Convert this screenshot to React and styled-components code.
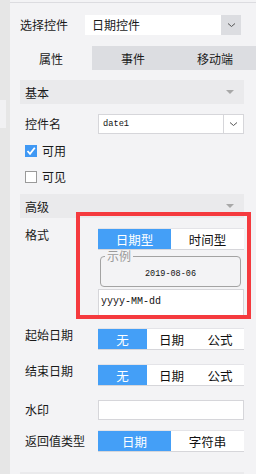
import React from "react";
import styled, { createGlobalStyle } from "styled-components";

const Global = createGlobalStyle`
  html, body { margin: 0; padding: 0; }
  body {
    width: 256px; height: 474px; overflow: hidden;
    font-family: "Noto Sans CJK SC", "Noto Sans", sans-serif;
    font-size: 12px; color: #1a1a1a;
  }
`;

const Page = styled.div`
  display: flex;
  width: 256px;
  height: 474px;
  overflow: hidden;
`;

const Strip = styled.div`
  width: 10px;
  flex: none;
  background: #e6e6e6;
  display: flex;
  flex-direction: column;
`;

const StripBlock = styled.div`
  margin-top: 100px;
  width: 6px;
  height: 28px;
  background: #f1f1f3;
`;

const Main = styled.div`
  flex: 1;
  background: #f3f3f5;
  display: flex;
  flex-direction: column;
  padding-top: 2px;
  & > * { flex-shrink: 0; }
`;

const TopLine = styled.div`
  height: 1px;
  background: #dcdce0;
`;

const SelectRow = styled.div`
  display: flex;
  align-items: center;
  height: 20px;
  margin-top: 12px;
  padding-left: 10px;
`;

const SelectLabel = styled.span`
  width: 65px;
  line-height: 20px;
`;

const Combo = styled.div`
  display: flex;
  width: 156px;
  height: 20px;
  background: #fff;
`;

const ComboText = styled.span`
  flex: 1;
  padding-left: 7px;
  line-height: 20px;
`;

const ComboBtn = styled.div`
  width: 20px;
  background: #dcdde1;
  display: flex;
  align-items: center;
  justify-content: center;
`;

const Tabs = styled.div`
  display: grid;
  grid-template-columns: 82px 82px 82px;
  height: 24px;
  margin-top: 11px;
`;

const Tab = styled.div`
  background: ${(p) => (p.$active ? "#f3f3f5" : "#dcdde1")};
  display: flex;
  align-items: center;
  justify-content: center;
`;

const Content = styled.div`
  display: flex;
  flex-direction: column;
  padding: 10px 12px 0 10px;
  & > * { flex-shrink: 0; }
`;

const Header = styled.div`
  height: 24px;
  background: #eaeaec;
  display: flex;
  align-items: center;
  justify-content: space-between;
  padding: 0 10px 0 5px;
`;

const Tri = styled.span`
  width: 0;
  height: 0;
  border-left: 4px solid transparent;
  border-right: 4px solid transparent;
  border-top: 4px solid #a8a8a8;
`;

const Row = styled.div`
  display: flex;
  align-items: ${(p) => (p.$top ? "flex-start" : "center")};
  margin-top: ${(p) => p.$mt}px;
`;

const Label = styled.span`
  width: 73px;
  padding-left: 5px;
  flex: none;
  line-height: ${(p) => p.$lh || 20}px;
`;

const Input = styled.div`
  width: 146px;
  height: ${(p) => p.$h || 20}px;
  box-sizing: border-box;
  border: 1px solid #d6d6da;
  background: #fff;
  display: flex;
`;

const InputText = styled.span`
  flex: 1;
  font-family: "Liberation Mono", "DejaVu Sans Mono", monospace;
  font-size: ${(p) => p.$fs || 9}px;
  line-height: ${(p) => p.$lh || 18}px;
  padding-left: ${(p) => p.$pl || 4}px;
  color: #111;
`;

const DropBtn = styled.div`
  width: 19px;
  border-left: 1px solid #d6d6da;
  display: flex;
  align-items: center;
  justify-content: center;
`;

const Check = styled.span`
  width: 12px;
  height: 12px;
  box-sizing: border-box;
  border: 1px solid ${(p) => (p.$on ? "#3f98f4" : "#9a9a9a")};
  background: ${(p) => (p.$on ? "#3f98f4" : "#fff")};
  display: flex;
  align-items: center;
  justify-content: center;
  margin-left: 5px;
  margin-right: 5px;
`;

const CheckRow = styled.div`
  display: flex;
  align-items: center;
  height: 12px;
  margin-top: ${(p) => p.$mt}px;
  margin-bottom: ${(p) => p.$mb || 0}px;
  line-height: 12px;
`;

const Seg = styled.div`
  display: grid;
  grid-template-columns: ${(p) => p.$cols};
  width: 146px;
  height: 22px;
  box-sizing: border-box;
  background: #fff;
  border-bottom: 1px solid #d6d6da;
  border-top: 1px solid #e4e4e8;
`;

const SegItem = styled.div`
  display: flex;
  align-items: center;
  justify-content: center;
  background: ${(p) => (p.$on ? "#449ff7" : "#fff")};
  color: ${(p) => (p.$on ? "#fff" : "#111")};
  font-size: 12.5px;
`;

const FormatBox = styled.div`
  position: relative;
  display: flex;
  flex-direction: column;
`;

const Fieldset = styled.fieldset`
  margin: 0 3px 2px 2px;
  padding: 2px 0 8px;
  border: 1px solid #a3a3a3;
  border-radius: 4px;
  height: 37px;
  box-sizing: border-box;
  display: flex;
  align-items: center;
  justify-content: center;
  min-width: 0;
`;

const Legend = styled.legend`
  color: #9a9a9a;
  padding: 0 2px;
  margin-left: 4px;
  font-size: 12px;
  line-height: 12px;
`;

const Sample = styled.span`
  font-family: "Liberation Mono", "DejaVu Sans Mono", monospace;
  font-size: 8.5px;
  color: #111;
  margin-top: 5px;
`;

const RedFrame = styled.div`
  position: absolute;
  left: -22px;
  top: -16px;
  width: 175px;
  height: 107px;
  box-sizing: border-box;
  border: 4px solid #f53a3e;
  pointer-events: none;
`;

const Spacer = styled.div`
  height: ${(p) => p.$h}px;
`;

const Chevron = () => (
  <svg width="9" height="6" viewBox="0 0 9 6">
    <path d="M1 1.5 L4.5 4.5 L8 1.5" fill="none" stroke="#555" strokeWidth="1" />
  </svg>
);

const CheckMark = () => (
  <svg width="10" height="10" viewBox="0 0 10 10">
    <path d="M1.5 5 L4 7.8 L8.8 1.8" fill="none" stroke="#fff" strokeWidth="1.8" />
  </svg>
);

export default function App() {
  return (
    <>
      <Global />
      <Page>
        <Strip>
          <StripBlock />
        </Strip>
        <Main>
          <TopLine />
          <SelectRow>
            <SelectLabel>选择控件</SelectLabel>
            <Combo>
              <ComboText>日期控件</ComboText>
              <ComboBtn>
                <Chevron />
              </ComboBtn>
            </Combo>
          </SelectRow>
          <Tabs>
            <Tab $active>属性</Tab>
            <Tab>事件</Tab>
            <Tab>移动端</Tab>
          </Tabs>
          <Content>
            <Header>
              <span>基本</span>
              <Tri />
            </Header>
            <Row $mt={10}>
              <Label>控件名</Label>
              <Input>
                <InputText $fs={8.7}>date1</InputText>
                <DropBtn>
                  <Chevron />
                </DropBtn>
              </Input>
            </Row>
            <CheckRow $mt={11}>
              <Check $on>
                <CheckMark />
              </Check>
              可用
            </CheckRow>
            <CheckRow $mt={14} $mb={11}>
              <Check />
              可见
            </CheckRow>
            <Header>
              <span>高级</span>
              <Tri />
            </Header>
            <Row $mt={10} $top>
              <Label $lh={14}>格式</Label>
              <FormatBox>
                <Seg $cols="73px 73px">
                  <SegItem $on>日期型</SegItem>
                  <SegItem>时间型</SegItem>
                </Seg>
                <Fieldset>
                  <Legend>示例</Legend>
                  <Sample>2019-08-06</Sample>
                </Fieldset>
                <Input $h={29}>
                  <InputText $fs={10} $pl={2} $lh={24}>
                    yyyy-MM-dd
                  </InputText>
                </Input>
                <RedFrame />
              </FormatBox>
            </Row>
            <Row $mt={10} $top>
              <Label $lh={14}>起始日期</Label>
              <Seg $cols="49px 49px 48px">
                <SegItem $on>无</SegItem>
                <SegItem>日期</SegItem>
                <SegItem>公式</SegItem>
              </Seg>
            </Row>
            <Row $mt={14} $top>
              <Label $lh={14}>结束日期</Label>
              <Seg $cols="49px 49px 48px">
                <SegItem $on>无</SegItem>
                <SegItem>日期</SegItem>
                <SegItem>公式</SegItem>
              </Seg>
            </Row>
            <Row $mt={14}>
              <Label>水印</Label>
              <Input />
            </Row>
            <Row $mt={10}>
              <Label $lh={22}>返回值类型</Label>
              <Seg $cols="73px 73px">
                <SegItem $on>日期</SegItem>
                <SegItem>字符串</SegItem>
              </Seg>
            </Row>
            <Spacer $h={20} />
            <Header />
          </Content>
        </Main>
      </Page>
    </>
  );
}
